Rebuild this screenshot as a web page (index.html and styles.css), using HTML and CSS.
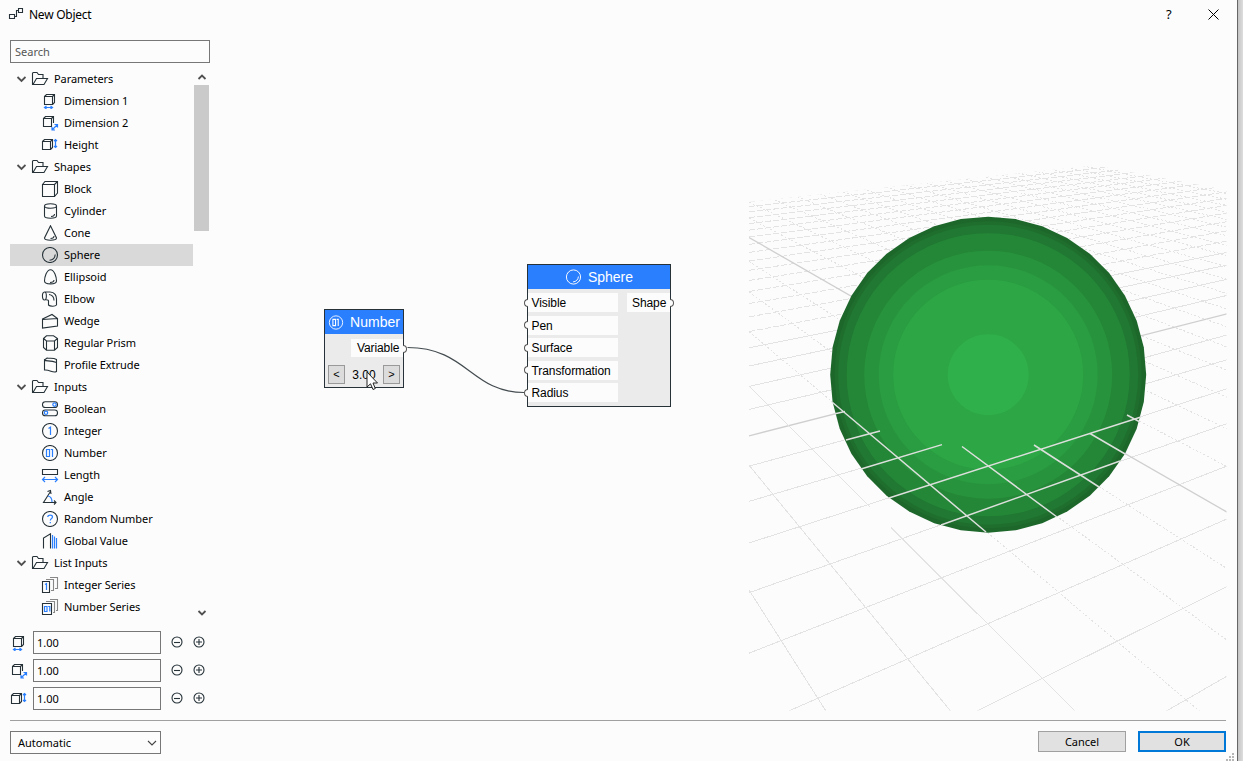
FILE: index.html
```html
<!DOCTYPE html>
<html lang="en">
<head>
<meta charset="utf-8">
<title>New Object</title>
<link rel="stylesheet" href="styles.css">
</head>
<body>
<svg class="defs" width="0" height="0">
  <symbol id="folder" viewBox="0 0 18 16"><path d="M3.5 13.5H1.5V2l1-.5H6L7.500 3.500H12V7M2 13.500L5.500 7.500H16.500L13 13.500Z"/></symbol>
  <symbol id="dim1" viewBox="0 0 18 16"><path d="M3.500 3.500h8v8h-8zM3.500 3.500L5.500 1.500H13.500V9.500L11.500 11.500M11.500 3.500L13.500 1.500"/><path class="bl" d="M3.500 14.500H11.500M5.500 13L3.500 14.500L5.500 16M9.500 13L11.500 14.500L9.500 16"/></symbol>
  <symbol id="dim2" viewBox="0 0 18 16"><path d="M2.500 3.500h8v8h-8zM2.500 3.500L4.500 1.500H12.500V8M10.500 3.500L12.500 1.500"/><path class="bl" d="M11 15L16.500 9.500M13.500 9.500H16.500V12.500M11 12V15H14"/></symbol>
  <symbol id="height" viewBox="0 0 18 16"><path d="M1.500 4.500h8v8h-8zM1.500 4.500L3.500 2.500H11.500V10.500L9.500 12.500M9.500 4.500L11.500 2.500"/><path class="bl" d="M14.500 2.500V10.500M13 4L14.500 2.500L16 4M13 9L14.500 10.500L16 9"/></symbol>
  <symbol id="block" viewBox="0 0 18 16"><path d="M1.500 3.500h12v12h-12zM1.500 3.500L4 .500H16.500V12L13.500 15.500M13.500 3.500L16.500 .500"/></symbol>
  <symbol id="cylinder" viewBox="0 0 18 16"><path d="M3.500 3V13C3.500 16 15.500 16 15.500 13V3M3.500 3C3.500 0 15.500 0 15.500 3S3.500 6 3.500 3M10 13.500C12 13.500 13.500 13 13.500 11"/></symbol>
  <symbol id="cone" viewBox="0 0 18 16"><path d="M9.500 .800L3.500 13C3.500 16 15.500 16 15.500 13ZM9.500 13.500C12 13.500 13 13 13 11"/></symbol>
  <symbol id="sphere" viewBox="0 0 18 16"><circle cx="9" cy="8" r="7.500"/><path d="M8.500 13.200C12 13 14 10.500 14.200 7.500"/></symbol>
  <symbol id="ellipsoid" viewBox="0 0 18 16"><path d="M9.500 .700C5.500 .700 3.500 8.500 3.500 12C3.500 15.800 15.500 15.800 15.500 12C15.500 8.500 13.500 .700 9.500 .700ZM9 13.500C12 13.500 13 13 13 11"/></symbol>
  <symbol id="elbow" viewBox="0 0 18 16"><path d="M3.500 1C.500 1 1 9 3.500 9S6 1 3.500 1H9C14 1 15.500 5 15.500 8V14C14 15.800 9 15.500 7.500 14V10C7.500 9 6.500 8.500 4 8.800M8 3.500C11.500 4 13 6 13 9.500"/></symbol>
  <symbol id="wedge" viewBox="0 0 18 16"><path d="M1.500 6L11 1.500L16.500 5.500V13L1.500 15ZM1.500 6.500L16.500 5.500"/></symbol>
  <symbol id="prism" viewBox="0 0 18 16"><path d="M2.500 3.500L5.500 .800H12.500L16.500 3.500V12.500L13.500 15.200H5.500L2.500 12.500ZM2.500 3.500L5.500 6H13.500L16.500 3.500M5.500 6V15M13.500 6V15"/></symbol>
  <symbol id="extrude" viewBox="0 0 18 16"><path d="M3.500 3C5 4.500 9 3 15.500 5.500V14.500C12 16.500 9 12.500 3.500 13ZM3.500 3L6 1C9 1.800 12 .500 15.500 2.500V5.500"/></symbol>
  <symbol id="boolean" viewBox="0 0 18 16"><rect x="1.500" y=".800" width="15" height="5.700" rx="2.800"/><rect x="1.500" y="9" width="15" height="5.700" rx="2.800"/><circle class="bl" cx="13.500" cy="3.600" r="1.700"/><circle class="bl" cx="5" cy="11.800" r="1.700"/></symbol>
  <symbol id="integer" viewBox="0 0 18 16"><circle cx="9" cy="8" r="7.500"/><path class="bl" d="M7.500 5.500L9.500 4.200V12"/></symbol>
  <symbol id="number" viewBox="0 0 18 16"><circle cx="9" cy="8" r="7.500"/><path class="bl" d="M5.500 4.500h3v7h-3zM9.800 4.500H11.500V12"/></symbol>
  <symbol id="length" viewBox="0 0 18 16"><path d="M1.500 2.500h15v5h-15z"/><path class="bl" d="M1.500 12.500H16.500M4 10L1.500 12.500L4 15M14 10L16.500 12.500L14 15"/></symbol>
  <symbol id="angle" viewBox="0 0 18 16"><path d="M9.500 2.500L2.500 13.500H15M13 11.500L15 13.500L13 15.500M6.500 2.500L9.500 1.500L10 5"/><path class="bl" d="M7 7C10 7.500 11 10.500 11 13"/></symbol>
  <symbol id="random" viewBox="0 0 18 16"><circle cx="9" cy="8" r="7.500"/><path class="bl" d="M6.800 6C6.800 3.500 11.500 3.500 11.500 6C11.500 7.500 9.300 7.500 9.300 9.500M9.300 11V12.200"/></symbol>
  <symbol id="global" viewBox="0 0 18 16"><path d="M2.500 15.500V5L9.500 .800V15.500"/><path class="bl" d="M11.500 2V15.500M13.500 3.500V15.500M15.500 5V15.500"/></symbol>
  <symbol id="iseries" viewBox="0 0 18 16"><path class="gr" d="M5 2.500H12.500V13.500H10M9 .500H16.500V11.500H14"/><path d="M1.500 4.500h7v11h-7z"/><path class="bl" d="M4 7.500L5.500 6.500V13"/></symbol>
  <symbol id="nseries" viewBox="0 0 18 16"><path class="gr" d="M5 2.500H13.500V13.500H12M9 .500H16.500V11.500H15"/><path d="M1.500 4.500h9v11h-9z"/><path class="bl" d="M3.500 7.500h2.500v5h-2.500zM7.200 7.500H8.800V12.500"/></symbol>
  <symbol id="chev" viewBox="0 0 10 8"><path class="chv" d="M1.500 2L5.500 6L9.500 2"/></symbol>
  <symbol id="minus" viewBox="0 0 12 12"><circle cx="6" cy="6" r="5"/><path d="M3 6.500H9"/></symbol>
  <symbol id="plus" viewBox="0 0 12 12"><circle cx="6" cy="6" r="5"/><path d="M3 6H9M6 3V9"/></symbol>
</svg>
<div class="dialog">
  <header class="titlebar">
    <svg class="ico app" width="16" height="14"><path d="M1.500 7.500h5v4h-5zM10.500 1.500h4v4h-4zM6.500 9.500H8.500V3.500H10.500"/></svg>
    <span class="title">New Object</span>
    <span class="help">?</span>
    <svg class="close" width="11" height="11"><path d="M.500 .500L10.500 10.500M10.500 .500L.500 10.500"/></svg>
  </header>
  <main class="body">
    <aside class="side">
      <div class="search">Search</div>
      <div class="tree">
        <ul class="list" id="tree"></ul>
        <div class="scroll"><svg class="ico" width="10" height="8"><path class="chv" d="M1.500 6L5 2.500L8.500 6"/></svg><i class="thumb"></i><svg class="ico" width="10" height="8"><path class="chv" d="M1.500 3L5 6.500L8.500 3"/></svg></div>
      </div>
      <div class="dims">
        <div class="dim"><svg class="ico" width="18" height="16"><use href="#dim1"/></svg><span class="field">1.00</span><svg class="ico step" width="12" height="12"><use href="#minus"/></svg><svg class="ico step" width="12" height="12"><use href="#plus"/></svg></div>
        <div class="dim"><svg class="ico" width="18" height="16"><use href="#dim2"/></svg><span class="field">1.00</span><svg class="ico step" width="12" height="12"><use href="#minus"/></svg><svg class="ico step" width="12" height="12"><use href="#plus"/></svg></div>
        <div class="dim"><svg class="ico" width="18" height="16"><use href="#height"/></svg><span class="field">1.00</span><svg class="ico step" width="12" height="12"><use href="#minus"/></svg><svg class="ico step" width="12" height="12"><use href="#plus"/></svg></div>
      </div>
    </aside>
    <section class="canvas">
      <svg class="wire" width="539" height="680"><path d="M197.500 317.500C257 317.500 261 362.500 314 362.500"/></svg>
      <div class="node number">
        <div class="head"><svg class="ico" width="16" height="15"><use href="#number"/></svg>Number</div>
        <div class="out">Variable<i class="port r"></i></div>
        <div class="stepper"><span class="btn">&lt;</span><span>3.00</span><span class="btn">&gt;</span></div>
      </div>
      <div class="node sph">
        <div class="head"><svg class="ico" width="17" height="16"><use href="#sphere"/></svg>Sphere</div>
        <div class="ports">
          <div class="ins">
            <span class="in">Visible<i class="port l"></i></span><span class="in">Pen<i class="port l"></i></span><span class="in">Surface<i class="port l"></i></span><span class="in">Transformation<i class="port l"></i></span><span class="in">Radius<i class="port l"></i></span>
          </div>
          <div class="shape">Shape<i class="port r"></i></div>
        </div>
      </div>
      <svg class="cursor" width="13" height="20"><path d="M1 1V16L4.500 12.800L7 18.500L9.300 17.500L7 12H11.500Z"/></svg>
    </section>
    <svg class="view" viewBox="749 150 478 561" width="478" height="561">
      <defs><clipPath id="floor"><path d="M749 202L1095 165.500L1226.500 190V710.500H749Z"/></clipPath></defs>
      <g id="grid" clip-path="url(#floor)"></g>
      <g id="ball"></g>
      <g class="front">
        <path d="M834 414L845 411.500M846 440L880 431M861 469L942 444.600M889 498L1141 417M941 525L1120 461M832 402L986 532M962 446.500L1057 517M1034 445L1099 487M1090 433.500L1126 454.500M1127 415L1140 422"/>
      </g>
    </svg>
  </main>
  <footer class="foot">
    <div class="select">Automatic<svg class="ico" width="10" height="8"><path class="thin" d="M1 2L5 6L9 2"/></svg></div>
    <div class="actions"><span class="action">Cancel</span><span class="action ok">OK</span></div>
  </footer>
  <svg class="grip" width="9" height="9"><path d="M6 0h2v2h-2zM3 3h2v2h-2zM6 3h2v2h-2zM0 6h2v2h-2zM3 6h2v2h-2zM6 6h2v2h-2z"/></svg>
</div>
<script src="app.js"></script>
</body>
</html>
```
FILE: styles.css
```css
* { box-sizing: border-box; }
body { margin: 0; width: 1243px; height: 761px; overflow: hidden; background: linear-gradient(90deg, #c4c4c4 1238px, #dedede 1243px); font: 11px "Noto Sans", sans-serif; color: #000; }
.defs { position: absolute; }
.dialog { position: relative; width: 1238px; height: 761px; display: flex; flex-direction: column; background: #fcfcfc; border-right: 1px solid #666; }
.ico { fill: none; stroke: #263238; stroke-width: 1.100; flex: none; --accent: #2a7fff; }
.bl { stroke: var(--accent); stroke-width: 1.200; }
.gr { stroke: #888; }
.chv { stroke: #505050; stroke-width: 1.800; }
.thin { stroke: #444; }
.titlebar { height: 30px; display: flex; align-items: center; padding: 0 18px 2px 8px; }
.title { font-size: 12px; letter-spacing: -.250px; margin-left: 5px; flex: 1; }
.help { font-size: 13px; width: 7px; margin-right: 36px; position: relative; left: 1px; }
.close { stroke: #000; fill: none; }
.body { height: 690px; display: flex; }
.side { width: 210px; padding: 10px 0 0 10px; }
.search { height: 23px; border: 1px solid #777; line-height: 22px; padding-left: 4px; color: #555; }
.tree { display: flex; height: 555px; padding-top: 5px; }
.list { list-style: none; margin: 0; padding: 0; width: 183px; }
.row { height: 22px; display: flex; align-items: center; padding-left: 31px; gap: 5px; line-height: 22px; white-space: nowrap; }
.label { letter-spacing: -.050px; }
.row.group { padding-left: 6px; gap: 5px; }
.row.on { background: #d9d9d9; }
.scroll { width: 15px; margin-left: 1px; display: flex; flex-direction: column; align-items: center; justify-content: space-between; padding: 5px 0 2px; }
.thumb { width: 15px; height: 146px; background: #cacaca; margin: 4px 0 auto; }
.dims { display: flex; flex-direction: column; gap: 5px; padding-top: 13px; }
.dim { display: flex; align-items: center; height: 23px; }
.field { width: 128px; height: 23px; border: 1px solid #777; margin: 0 9.500px 0 5px; line-height: 22px; padding-left: 3px; }
.step { margin-bottom: 2px; }
.step + .step { margin-left: 10px; }
.canvas { position: relative; width: 539px; }
.wire { position: absolute; left: 0; top: 0; fill: none; stroke: #444c50; stroke-width: 1.200; }
.node { position: absolute; background: #ebebeb; border: 1px solid #263238; font: 12px "Liberation Sans", sans-serif; }
.number { left: 114px; top: 279px; width: 80px; height: 79px; }
.sph { left: 317px; top: 234px; width: 144px; height: 143px; }
.head { height: 24px; background: #2a7fff; color: #fff; font-size: 14px; line-height: 25px; display: flex; align-items: center; justify-content: center; gap: 6px; }
.head .ico { stroke: #fff; stroke-width: 1; --accent: #fff; }
.out { position: relative; margin: 5px 0 0 26px; height: 18px; background: #fcfcfc; line-height: 18px; padding-left: 6px; letter-spacing: -.100px; }
.port { position: absolute; top: 5.500px; width: 4px; height: 8px; border: 1px solid #555; background: #fcfcfc; }
.port.r { right: -4px; border-left: 0; border-radius: 0 4px 4px 0; }
.port.l { left: -4px; border-right: 0; border-radius: 4px 0 0 4px; }
.stepper { display: flex; align-items: center; justify-content: space-between; padding: 8px 3px 0; }
.btn { width: 17px; height: 19px; background: #dcdcdc; border: 1px solid #999; text-align: center; line-height: 17px; font-size: 11px; }
.ports { display: flex; justify-content: space-between; padding-top: 4px; }
.ins { display: flex; flex-direction: column; gap: 3.500px; width: 90px; }
.in, .shape { position: relative; height: 19px; background: #fcfcfc; line-height: 20px; padding-left: 3.500px; letter-spacing: -.080px; }
.shape { width: 43px; padding-left: 5px; }
.cursor { position: absolute; left: 156px; top: 341px; fill: #fff; stroke: #222; }
.view { margin-top: 120px; }
.grid { stroke: #e3e3e3; fill: none; shape-rendering: crispEdges; }
.axis { stroke: #cfcfcf; fill: none; stroke-width: 1.300; }
.front { stroke: #dcdfdc; stroke-width: 1.500; fill: none; }
.foot { margin: 0 11px 0 10px; border-top: 1px solid #a0a0a0; height: 41px; display: flex; justify-content: space-between; padding-top: 10px; }
.select { width: 151px; height: 23px; border: 1px solid #777; display: flex; align-items: center; justify-content: space-between; padding: 0 3px 0 7px; }
.actions { display: flex; gap: 12px; }
.action { width: 88px; height: 21px; background: #e1e1e1; border: 1px solid #a0a0a0; text-align: center; line-height: 20px; }
.ok { border: 2px solid #0078d7; line-height: 18px; }
.grip { position: absolute; right: 2px; bottom: -1px; fill: #b5b5b5; }
```
FILE: app.js
```js
const tree = [
  ["Parameters"], ["Dimension 1", "dim1"], ["Dimension 2", "dim2"], ["Height", "height"],
  ["Shapes"], ["Block", "block"], ["Cylinder", "cylinder"], ["Cone", "cone"], ["Sphere", "sphere"],
  ["Ellipsoid", "ellipsoid"], ["Elbow", "elbow"], ["Wedge", "wedge"], ["Regular Prism", "prism"], ["Profile Extrude", "extrude"],
  ["Inputs"], ["Boolean", "boolean"], ["Integer", "integer"], ["Number", "number"], ["Length", "length"],
  ["Angle", "angle"], ["Random Number", "random"], ["Global Value", "global"],
  ["List Inputs"], ["Integer Series", "iseries"], ["Number Series", "nseries"]
];
document.getElementById("tree").innerHTML = tree.map(([label, icon]) => icon
  ? `<li class="row${label === "Sphere" ? " on" : ""}"><svg class="ico" width="18" height="16"><use href="#${icon}"/></svg><span class="label">${label}</span></li>`
  : `<li class="row group"><svg class="ico" width="10" height="8"><use href="#chev"/></svg><svg class="ico folder" width="18" height="16"><use href="#folder"/></svg><span class="label">${label}</span></li>`
).join("");

// Floor grid: both families of lines in perspective, horizon at y = 35.
let lines = "";
const line = (yl, yr, cls, dash) => {
  lines += `<path class="${cls}" stroke-dasharray="${dash}" d="M749 ${yl.toFixed(1)}L1227 ${yr.toFixed(1)}"/>`;
};
for (let k = -4; k <= 24; k++) {
  line(35 + 5700 / (10.22 + k), 35 + 3947 / (10.157 + k), k === 4 ? "axis" : "grid", k === 4 ? "none" : k > 8 ? "6 2" : "none");
}
for (let j = 0; j <= 26; j++) {
  const dash = j === 6 || j < 2 ? "none" : j === 2 ? "171 29 1000" : "2 2";
  line(35 + 1913 / (3.447 + j), 35 + 4509 / (3.45 + j), j === 6 ? "axis" : "grid", dash);
}
document.getElementById("grid").innerHTML = lines;

// Shaded sphere: faceted rings from rim to centre.
const rings = [[158, "#1d672b"], [153.5, "#1f6e2e"], [150, "#207832"], [141.5, "#248737"], [124, "#28933d"], [109.5, "#2a9c41"], [95, "#2da645"], [40.5, "#30b04a"]];
document.getElementById("ball").innerHTML = rings.map(([r, fill], i) => {
  const pts = [];
  for (let a = 0; a < 360; a += i ? 5 : 10) {
    pts.push((988.2 + r * Math.cos(a * Math.PI / 180)).toFixed(1) + "," + (374.700 + r * Math.sin(a * Math.PI / 180)).toFixed(1));
  }
  return `<polygon fill="${fill}" points="${pts.join(" ")}"/>`;
}).join("");
```
